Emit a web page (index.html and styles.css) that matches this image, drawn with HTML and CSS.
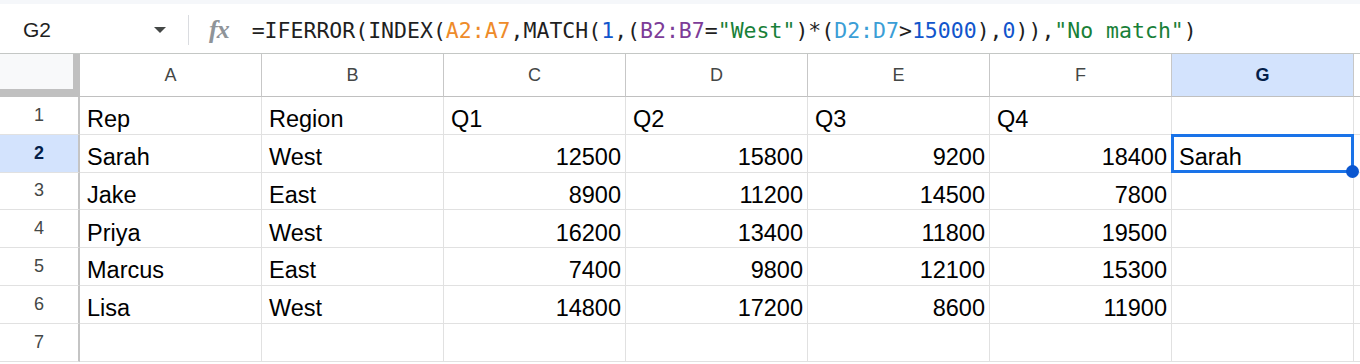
FILE: index.html
```html
<!DOCTYPE html>
<html lang="en">
<head>
  <meta charset="UTF-8">
  <meta name="viewport" content="width=device-width, initial-scale=1.0">
  <title>Sales by Rep</title>
  <link rel="stylesheet" href="styles.css">
</head>
<body>
  <div class="top-strip"></div>

  <div class="formula-bar">
    <div class="name-box">
      <span class="cell-ref">G2</span>
      <span class="caret"></span>
    </div>
    <div class="divider"></div>
    <span class="fx">fx</span>
    <div class="formula">=IFERROR(INDEX(<span class="ref-a">A2:A7</span>,MATCH(<span class="num">1</span>,(<span class="ref-b">B2:B7</span>=<span class="str">"West"</span>)*(<span class="ref-d">D2:D7</span>&gt;<span class="num">15000</span>),<span class="num">0</span>)),<span class="str">"No match"</span>)</div>
  </div>

  <div class="sheet">
    <!-- column headers -->
    <div class="corner"></div>
    <div class="col-head">A</div>
    <div class="col-head">B</div>
    <div class="col-head">C</div>
    <div class="col-head">D</div>
    <div class="col-head">E</div>
    <div class="col-head">F</div>
    <div class="col-head active">G</div>
    <div class="col-head"></div>

    <!-- row 1 -->
    <div class="row-head">1</div>
    <div class="cell">Rep</div>
    <div class="cell">Region</div>
    <div class="cell">Q1</div>
    <div class="cell">Q2</div>
    <div class="cell">Q3</div>
    <div class="cell">Q4</div>
    <div class="cell"></div>
    <div class="cell"></div>

    <!-- row 2 -->
    <div class="row-head active">2</div>
    <div class="cell">Sarah</div>
    <div class="cell">West</div>
    <div class="cell num-cell">12500</div>
    <div class="cell num-cell">15800</div>
    <div class="cell num-cell">9200</div>
    <div class="cell num-cell">18400</div>
    <div class="cell selected">Sarah<span class="selection"><span class="handle"></span></span></div>
    <div class="cell"></div>

    <!-- row 3 -->
    <div class="row-head">3</div>
    <div class="cell">Jake</div>
    <div class="cell">East</div>
    <div class="cell num-cell">8900</div>
    <div class="cell num-cell">11200</div>
    <div class="cell num-cell">14500</div>
    <div class="cell num-cell">7800</div>
    <div class="cell"></div>
    <div class="cell"></div>

    <!-- row 4 -->
    <div class="row-head">4</div>
    <div class="cell">Priya</div>
    <div class="cell">West</div>
    <div class="cell num-cell">16200</div>
    <div class="cell num-cell">13400</div>
    <div class="cell num-cell">11800</div>
    <div class="cell num-cell">19500</div>
    <div class="cell"></div>
    <div class="cell"></div>

    <!-- row 5 -->
    <div class="row-head">5</div>
    <div class="cell">Marcus</div>
    <div class="cell">East</div>
    <div class="cell num-cell">7400</div>
    <div class="cell num-cell">9800</div>
    <div class="cell num-cell">12100</div>
    <div class="cell num-cell">15300</div>
    <div class="cell"></div>
    <div class="cell"></div>

    <!-- row 6 -->
    <div class="row-head">6</div>
    <div class="cell">Lisa</div>
    <div class="cell">West</div>
    <div class="cell num-cell">14800</div>
    <div class="cell num-cell">17200</div>
    <div class="cell num-cell">8600</div>
    <div class="cell num-cell">11900</div>
    <div class="cell"></div>
    <div class="cell"></div>

    <!-- row 7 -->
    <div class="row-head">7</div>
    <div class="cell"></div>
    <div class="cell"></div>
    <div class="cell"></div>
    <div class="cell"></div>
    <div class="cell"></div>
    <div class="cell"></div>
    <div class="cell"></div>
    <div class="cell"></div>
  </div>
</body>
</html>
```

FILE: styles.css
```css
* {
  box-sizing: border-box;
}

body {
  margin: 0;
  background-color: #ffffff;
  font-family: 'Liberation Sans', Arial, sans-serif;
  color: #000000;
  overflow: hidden;
}

.top-strip {
  height: 4px;
  background-color: #f5f7fa;
}

/* formula bar */

.formula-bar {
  display: flex;
  align-items: center;
  height: 50px;
  padding-top: 3px;
  border-bottom: 1px solid #c4c7c5;
}

.name-box {
  display: flex;
  align-items: center;
  justify-content: space-between;
  width: 176px;
  padding-left: 23px;
  padding-right: 10px;
}

.cell-ref {
  font-size: 21px;
  color: #1f1f1f;
}

.caret {
  width: 0;
  height: 0;
  border-left: 6px solid transparent;
  border-right: 6px solid transparent;
  border-top: 6px solid #444746;
}

.divider {
  width: 1px;
  height: 30px;
  margin-left: 12px;
  background-color: #dadce0;
}

.fx {
  margin-left: 20px;
  font-family: 'Liberation Serif', serif;
  font-style: italic;
  font-weight: bold;
  font-size: 26px;
  color: #8f9499;
  letter-spacing: -1px;
}

.formula {
  margin-left: 23px;
  font-family: 'DejaVu Sans Mono', monospace;
  font-size: 21.5px;
  color: #1f1f1f;
  white-space: pre;
}

.ref-a { color: #ee8b2a; }
.ref-b { color: #7d3c98; }
.ref-d { color: #3b9ed6; }
.num { color: #1155cc; }
.str { color: #188038; }

/* grid */

.sheet {
  display: grid;
  grid-template-columns: 80px repeat(7, 182px) 1fr;
  grid-template-rows: 43px repeat(7, 37.8px);
}

.corner {
  background-color: #f8f9fa;
  border-right: 7px solid #c0c0c0;
  border-bottom: 8px solid #c0c0c0;
}

.col-head {
  display: flex;
  align-items: center;
  justify-content: center;
  font-size: 18px;
  color: #444746;
  border-right: 1px solid #c7c7c7;
  border-bottom: 1px solid #c0c0c0;
}

.col-head.active,
.row-head.active {
  background-color: #d3e3fd;
  color: #041e49;
  font-weight: bold;
}

.row-head {
  display: flex;
  align-items: center;
  justify-content: center;
  font-size: 18px;
  color: #444746;
  border-right: 2px solid #c4c4c4;
  border-bottom: 1px solid #e1e1e1;
}

.cell {
  display: flex;
  align-items: flex-end;
  padding: 0 4px 2px 7px;
  font-size: 23.5px;
  line-height: 1;
  white-space: nowrap;
  border-right: 1px solid #e1e1e1;
  border-bottom: 1px solid #e1e1e1;
}

.num-cell {
  justify-content: flex-end;
}

.selected {
  position: relative;
}

.selection {
  position: absolute;
  top: -1px;
  left: -1px;
  right: -1px;
  bottom: -1px;
  border: 3px solid #1a73e8;
}

.handle {
  position: absolute;
  right: -8px;
  bottom: -8px;
  width: 13px;
  height: 13px;
  border-radius: 50%;
  background-color: #0b57d0;
}
```
